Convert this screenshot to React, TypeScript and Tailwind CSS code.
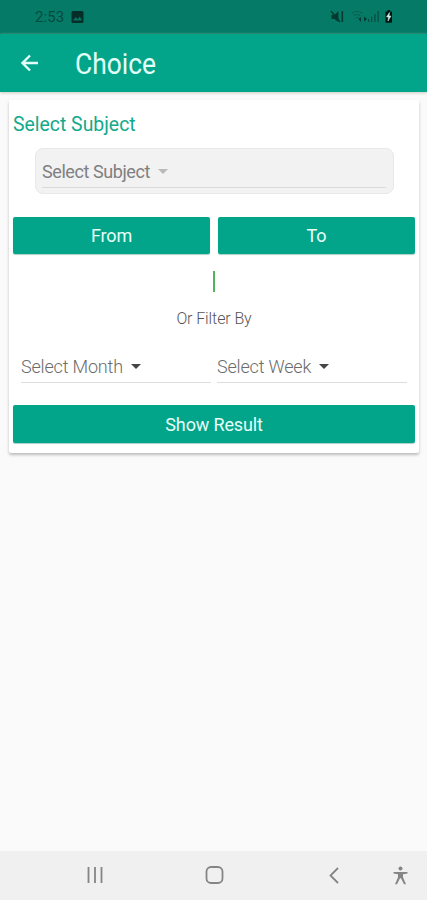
import React from "react";

function StatusBar() {
  return (
    <header className="flex h-[34px] items-center bg-[#057b67] pl-[35px] pr-[33px] text-[#07493f]">
      <span className="text-[15px] leading-none tracking-[0.1px]">2:53</span>
      <svg className="ml-[7px]" width="13" height="12" viewBox="0 0 13 12">
        <rect x="0.5" y="0" width="12" height="12" rx="1.5" fill="#052e29" />
        <path d="M2 9.5 4.7 6l2 2.2L8.8 5.5 11 9.5Z" fill="#087361" />
      </svg>
      <svg className="ml-auto" width="64" height="16" viewBox="0 0 64 16">
        <g fill="#053a33">
          <path d="M1.5 6h3l4-4v11l-4-3h-3Z" />
          <path d="M1 2 10 13" stroke="#053a33" strokeWidth="1.5" />
          <rect x="11.500" y="2" width="1.600" height="11" />
        </g>
        <path d="M22 4q5-3 10 0M24 6.500q3-2 6 0M26 9q1.500-1 3 0" fill="none" stroke="#07604f" strokeWidth="1.1" />
        <path d="m28.500 10 2.500-2v5Zm8.500 0-3-2.500v5Z" fill="#053a33" />
        <g fill="#07493f">
          <rect x="38" y="10" width="1.2" height="3" />
          <rect x="41" y="7.500" width="1.2" height="5.500" />
          <rect x="44.300" y="5" width="1.2" height="8" />
          <rect x="47.500" y="2" width="1.200" height="11" />
        </g>
        <path d="M57.500 1h2.500v1.500h1.500q.5 0 .5.5v10q0 .7-.7.7h-5.100q-.7 0-.7-.7V3q0-.5.5-.5h1.500Z" fill="#011512" />
        <path d="m59.500 3.500-3 4.500h2l-.5 4 3-5h-2Z" fill="#d8eee9" stroke="#d8eee9" strokeWidth=".5" />
      </svg>
    </header>
  );
}

function AppBar() {
  return (
    <div className="flex h-[58px] items-center bg-[#03a58a] pl-[21px] text-[#e2fff8] shadow-[0_1px_3px_#c4cbbd]">
      <svg width="18" height="18" viewBox="0 0 18 18" fill="none" stroke="currentColor" strokeWidth="2.3">
        <path d="M17 9H2M9 1.500 1.500 9 9 16.500" />
      </svg>
      <h1 className="ml-[36px] mt-[1px] origin-left scale-x-[0.88] text-[30px] leading-none">Choice</h1>
    </div>
  );
}

function Caret({ color }: { color: string }) {
  return (
    <svg width="10" height="5" viewBox="0 0 10 5">
      <path d="M0 0h10L5 5Z" fill={color} />
    </svg>
  );
}

const buttonClass =
  "flex items-center justify-center rounded-[2px] bg-[#03a58a] pt-[1px] text-[18px] leading-none tracking-[-0.15px] text-[#e6fff9] shadow-[0_1px_1px_#a9cfc7]";

export default function App() {
  return (
    <div className="flex h-[900px] w-[427px] flex-col overflow-hidden bg-[#fafafa] font-['Roboto','Noto_Sans',sans-serif]">
      <StatusBar />
      <AppBar />
      <main className="flex-1">
        <section className="ml-[9px] mt-[8px] h-[353px] w-[410px] rounded-[2px] bg-white px-1 pt-[14px] shadow-[0_2px_3px_#bcbcbc]">
          <h2 className="w-fit origin-left scale-x-[0.97] text-[20px] leading-[20px] text-[#13a98b]">Select Subject</h2>
          <div className="ml-[22px] mt-[14px] h-[46px] w-[359px] rounded-[8px] border border-[#e8e8e8] bg-[#f2f2f2] pl-[6px] pr-[7px]">
            <div className="flex h-[39px] items-center gap-[8px] border-b border-[#dadada] pt-[7px] text-[#808080]">
              <span className="text-[18px] leading-none tracking-[-0.42px]">Select Subject</span>
              <Caret color="#b9b9b9" />
            </div>
          </div>
          <div className="mt-[23px] grid h-[37px] grid-cols-2 gap-[8px]">
            <button className={buttonClass}>From</button>
            <button className={buttonClass}>To</button>
          </div>
          <div className="mx-auto mt-[17px] h-[21px] w-[2px] bg-[#51b45a]" />
          <p className="mt-[18px] text-center text-[16px] font-light leading-[18px] tracking-[-0.1px] text-[#555]">Or Filter By</p>
          <div className="ml-[8px] mr-[8px] mt-[23px] grid h-[32px] grid-cols-2 gap-[6px] text-[18px] font-light leading-none tracking-[-0.18px] text-[#6b6b6b]">
            <div className="flex items-center gap-[8px] border-b border-[#dedede]">
              <span>Select Month</span>
              <Caret color="#454545" />
            </div>
            <div className="flex items-center gap-[8px] border-b border-[#dedede]">
              <span>Select Week</span>
              <Caret color="#454545" />
            </div>
          </div>
          <button className={`${buttonClass} mt-[22px] h-[38px] w-full`}>Show Result</button>
        </section>
      </main>
      <nav className="h-[49px] bg-[#f0f0f0]">
        <svg width="427" height="49" viewBox="0 0 427 49" fill="none" stroke="#858585" strokeWidth="1.800">
          <path d="M88.500 16v16M95 16v16M101.500 16v16" />
          <rect x="206.500" y="16" width="16" height="16" rx="4.500" />
          <path d="m338 17-7.500 7.500 7.500 7.500" />
          <circle cx="400.500" cy="17.500" r="2" fill="#858585" stroke="none" />
          <path d="M393.500 21h14v1.500l-4.500.8v3l3 7h-2l-3-6h-1l-3 6h-2l3-7v-3l-4.500-.8Z" fill="#858585" stroke="none" />
        </svg>
      </nav>
    </div>
  );
}
